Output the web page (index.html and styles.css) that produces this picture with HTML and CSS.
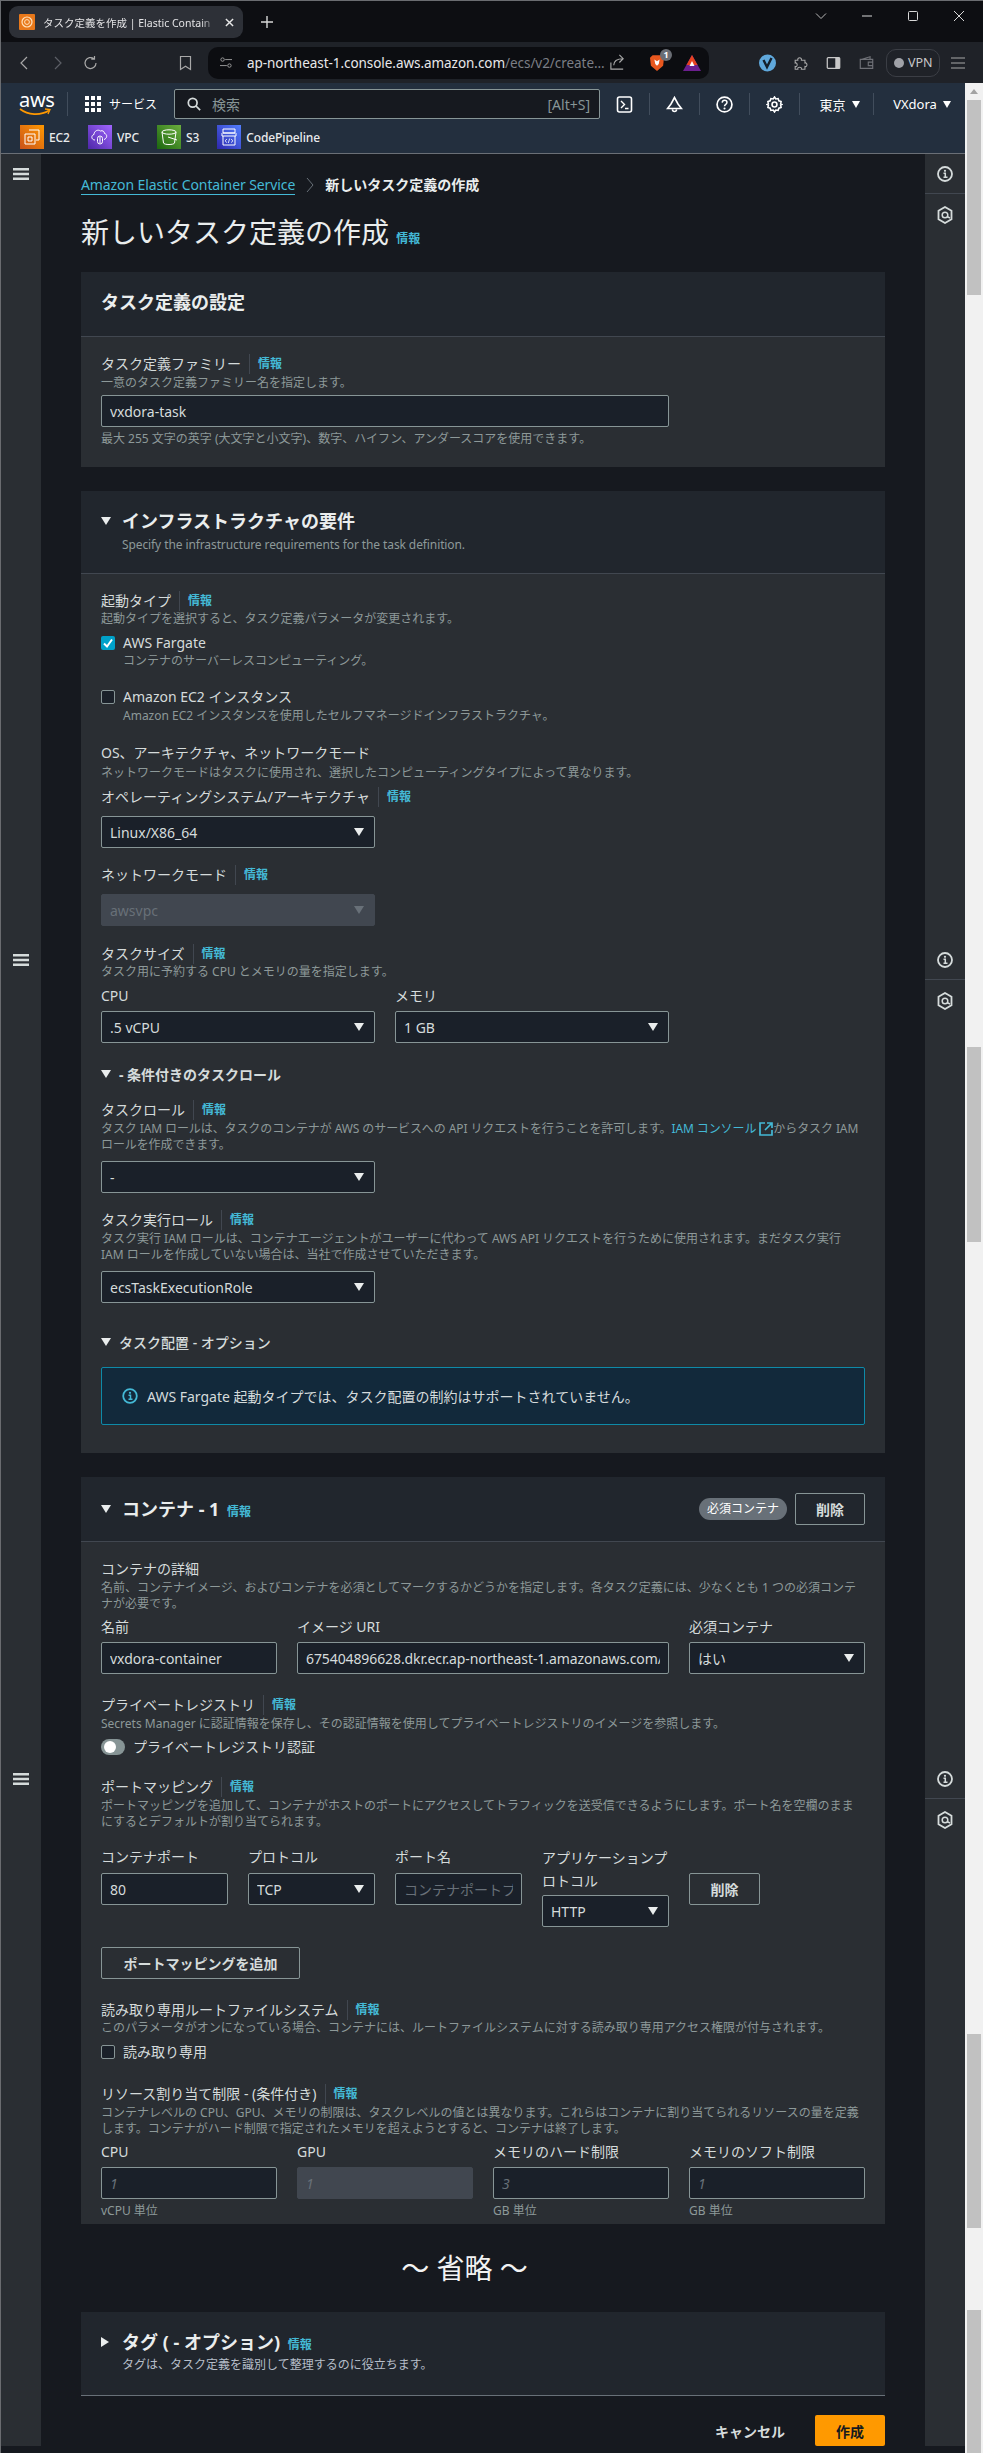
FILE: index.html
```html
<!DOCTYPE html>
<html lang="ja">
  <head>
    <meta charset="UTF-8" />
    <meta name="viewport" content="width=device-width, initial-scale=1.0" />
    <title>新しいタスク定義の作成</title>
    <link rel="stylesheet" href="styles.css">
  </head>
  <body>
    <div class="page">
      <!-- Browser chrome -->
      <div class="tabbar">
        <div class="tab">
          <svg class="favicon" viewBox="0 0 16 16"><rect width="16" height="16" rx="1" fill="#e8781a"/><circle cx="8" cy="8" r="5" fill="none" stroke="#ffe2bd" stroke-width="1.2"/><circle cx="8" cy="8" r="2.4" fill="none" stroke="#ffe2bd" stroke-width="1"/></svg>
          <span class="tab-title">タスク定義を作成 | Elastic Contain</span>
          <svg class="tab-close" viewBox="0 0 10 10"><path d="M1 1l8 8M9 1l-8 8" stroke="#e8e8e8" stroke-width="1.6"/></svg>
        </div>
        <svg class="tab-new" viewBox="0 0 12 12"><path d="M6 0v12M0 6h12" stroke="#d8d8d8" stroke-width="1.4"/></svg>
        <div class="win-controls">
          <svg viewBox="0 0 12 12"><path d="M1 3.5l5 5 5-5" fill="none" stroke="#b8b8b8"/></svg>
          <svg viewBox="0 0 12 12"><path d="M1 6h10" stroke="#d8d8d8"/></svg>
          <svg viewBox="0 0 12 12"><rect x="1.5" y="1.5" width="9" height="9" rx="1" fill="none" stroke="#d8d8d8"/></svg>
          <svg viewBox="0 0 12 12"><path d="M1 1l10 10M11 1L1 11" stroke="#d8d8d8"/></svg>
        </div>
      </div>

      <div class="toolbar">
        <svg class="tool" viewBox="0 0 16 16"><path d="M10.5 2L4.5 8l6 6" fill="none" stroke="#a8a8a8" stroke-width="1.2"/></svg>
        <svg class="tool" viewBox="0 0 16 16"><path d="M5.5 2l6 6-6 6" fill="none" stroke="#5c5f66" stroke-width="1.2"/></svg>
        <svg class="tool" viewBox="0 0 16 16"><path d="M13.5 8A5.5 5.5 0 1 1 11.5 3.8M12 1v3.2H8.8" fill="none" stroke="#a8a8a8" stroke-width="1.2"/></svg>
        <svg class="tool tool-mark" viewBox="0 0 16 16"><path d="M3 1.5h10v13l-5-3.2-5 3.2z" fill="none" stroke="#a8a8a8" stroke-width="1.2"/></svg>
        <div class="addressbar">
          <svg class="site-icon" viewBox="0 0 14 14"><circle cx="3" cy="3" r="2" fill="none" stroke="#a8a8a8"/><path d="M6 3h8M0 10h8" stroke="#a8a8a8"/><circle cx="11" cy="10" r="2" fill="none" stroke="#a8a8a8"/></svg>
          <span class="url">ap-northeast-1.console.aws.amazon.com<span class="url-path">/ecs/v2/create...</span></span>
          <svg class="share" viewBox="0 0 18 18"><path d="M2 9v7h13M5 12c0-5 4-7 10-7M11 1l4 4-4 4" fill="none" stroke="#a8a8a8" stroke-width="1.2"/></svg>
          <span class="url-sep"></span>
          <span class="brave">
            <svg viewBox="0 0 16 20"><path d="M3 1h10l3 3-1 9-7 6-7-6-1-9z" fill="#e8571e"/><path d="M5 6l3 2 3-2-1 5-2 2-2-2z" fill="#fff"/></svg>
            <span class="brave-count">1</span>
          </span>
          <svg class="rewards" viewBox="0 0 18 16"><path d="M9 0l9 16H0z" fill="#6b1f8f"/><path d="M9 0l5.5 10h-11z" fill="#e8431f"/><path d="M9 6l2.5 5h-5z" fill="#fff"/></svg>
        </div>
        <svg class="tool-ext vivaldi" viewBox="0 0 18 18"><circle cx="9" cy="9" r="8.5" fill="#5fa8dc"/><path d="M5 6l3.5 7L13 4" fill="none" stroke="#14202c" stroke-width="2.4"/></svg>
        <svg class="tool-ext" viewBox="0 0 18 18"><path d="M3 6h3c-1-4 5-4 4 0h4v3c3-1 3 5 0 4v3h-4c1-3-5-3-4 0H3v-3c3 1 3-5 0-4z" fill="none" stroke="#a8a8a8" stroke-width="1.2"/></svg>
        <svg class="tool-ext" viewBox="0 0 18 18"><rect x="2" y="3" width="14" height="12" rx="1" fill="none" stroke="#c8c8c8" stroke-width="1.4"/><rect x="11" y="3" width="5" height="12" fill="#c8c8c8"/></svg>
        <svg class="tool-ext" viewBox="0 0 18 18"><path d="M3 5l10-3v3M2 5h14v10H2zM11 8h5v4h-5z" fill="none" stroke="#6e7076" stroke-width="1.3"/></svg>
        <div class="vpn"><span class="vpn-dot"></span>VPN</div>
        <svg class="tool-menu" viewBox="0 0 14 12"><path d="M0 1h14M0 6h14M0 11h14" stroke="#a8a8a8" stroke-width="1.2"/></svg>
      </div>

      <div class="app-row">
        <div class="app">
          <!-- AWS console header -->
          <header class="nav">
            <div class="nav-main">
              <div class="aws-logo">
                <span class="aws-word">aws</span>
                <svg viewBox="0 0 32 8"><path d="M1 1c8 6 20 7 29 1.500" fill="none" stroke="#f90" stroke-width="1.800"/><path d="M26 1l5 .5-2 4.500" fill="none" stroke="#f90" stroke-width="1.300"/></svg>
              </div>
              <span class="nav-divider"></span>
              <div class="services">
                <span class="dots"><i></i><i></i><i></i><i></i><i></i><i></i><i></i><i></i><i></i></span>
                <span>サービス</span>
              </div>
              <div class="nav-search">
                <svg viewBox="0 0 16 16"><circle cx="6.500" cy="6.500" r="5" fill="none" stroke="#d5dbdb" stroke-width="2"/><path d="M10 10l5 5" stroke="#d5dbdb" stroke-width="2"/></svg>
                <span class="nav-search-text">検索</span>
                <span class="nav-search-key">[Alt+S]</span>
              </div>
              <div class="nav-cell">
                <svg viewBox="0 0 16 17"><rect x="1" y="1" width="14" height="15" rx="2" fill="none" stroke="#fff" stroke-width="1.600"/><path d="M4.500 5l3.500 3.500L4.500 12M8.500 12.500H12" fill="none" stroke="#fff" stroke-width="1.400"/></svg>
              </div>
              <div class="nav-cell">
                <svg viewBox="0 0 16 17"><path d="M8 1.500L4.500 8 1 12.500h14L11.500 8zM6 13.500a2 2 0 0 0 4 0" fill="none" stroke="#fff" stroke-width="1.600"/></svg>
              </div>
              <div class="nav-cell">
                <svg viewBox="0 0 16 16"><circle cx="8" cy="8" r="7" fill="none" stroke="#fff" stroke-width="1.600"/><path d="M5.800 6.200C6 4.600 7 4 8 4c1.400 0 2.300.9 2.300 2 0 1.800-2.300 1.900-2.300 3.600" fill="none" stroke="#fff" stroke-width="1.400"/><circle cx="8" cy="11.800" r="1" fill="#fff"/></svg>
              </div>
              <div class="nav-cell">
                <svg viewBox="0 0 16 16"><path d="M8 1l1.200 1.800 2.200-.4.700 2.100 2.100.7-.4 2.200L15 8l-1.200.6.400 2.200-2.100.7-.7 2.100-2.200-.4L8 15l-1.200-1.800-2.200.4-.7-2.100-2.100-.7.4-2.200L1 8l1.200-.6-.4-2.200 2.100-.7.7-2.100 2.200.4z" fill="none" stroke="#fff" stroke-width="1.500"/><circle cx="8" cy="8" r="2.300" fill="none" stroke="#fff" stroke-width="1.500"/></svg>
              </div>
              <div class="nav-cell nav-region">東京 <span class="caret-sm"></span></div>
              <div class="nav-cell nav-user">VXdora <span class="caret-sm"></span></div>
            </div>
            <div class="nav-favs">
              <div class="fav">
                <svg viewBox="0 0 24 24"><defs><linearGradient id="g-ec2" x1="0" y1="1" x2="1" y2="0"><stop offset="0" stop-color="#c8511b"/><stop offset="1" stop-color="#f90"/></linearGradient></defs><rect width="24" height="24" fill="url(#g-ec2)"/><path d="M9 5h10v10h-3M5 9h10v10H5zM8 12h4v4H8z" fill="none" stroke="#fff" stroke-width="1"/></svg>
                <span>EC2</span>
              </div>
              <div class="fav">
                <svg viewBox="0 0 24 24"><defs><linearGradient id="g-vpc" x1="0" y1="1" x2="1" y2="0"><stop offset="0" stop-color="#4d27a8"/><stop offset="1" stop-color="#a166ff"/></linearGradient></defs><rect width="24" height="24" fill="url(#g-vpc)"/><path d="M7 15c-4 0-4-5-1-5.500C6 6 10 4 12.500 6c2-1 4 .5 4 2.500 3 .5 3 5-.5 6" fill="none" stroke="#fff" stroke-width="1"/><rect x="9.500" y="11" width="5" height="8" rx="2.500" fill="none" stroke="#fff" stroke-width="1"/><path d="M12 12v6" stroke="#fff"/></svg>
                <span>VPC</span>
              </div>
              <div class="fav">
                <svg viewBox="0 0 24 24"><defs><linearGradient id="g-s3" x1="0" y1="1" x2="1" y2="0"><stop offset="0" stop-color="#1b660f"/><stop offset="1" stop-color="#6cae3e"/></linearGradient></defs><rect width="24" height="24" fill="url(#g-s3)"/><ellipse cx="12" cy="7" rx="7" ry="2.200" fill="none" stroke="#fff"/><path d="M5 7l1.500 11c.5 2 10.500 2 11 0L19 7M11 12l9 3" fill="none" stroke="#fff"/></svg>
                <span>S3</span>
              </div>
              <div class="fav">
                <svg viewBox="0 0 24 24"><defs><linearGradient id="g-cp" x1="0" y1="1" x2="1" y2="0"><stop offset="0" stop-color="#2e27ad"/><stop offset="1" stop-color="#527fff"/></linearGradient></defs><rect width="24" height="24" fill="url(#g-cp)"/><path d="M6 4h12v4H6zM6 8h12M5 8v3h14V8M6 11v9h12v-9" fill="none" stroke="#fff"/><path d="M10 14l-2 1.800 2 1.800M14 14l2 1.800-2 1.800M12.700 13.500l-1.400 4.500" fill="none" stroke="#fff" stroke-width=".8"/></svg>
                <span>CodePipeline</span>
              </div>
            </div>
          </header>

          <div class="shell">
            <aside class="rail rail-left">
              <div class="rail-group rail-first"><svg class="menu-icon" viewBox="0 0 16 12"><path d="M0 1.200h16M0 6h16M0 10.800h16" stroke="#d5dbdb" stroke-width="2.400"/></svg></div>
              <div class="rail-group rail-second"><svg class="menu-icon" viewBox="0 0 16 12"><path d="M0 1.200h16M0 6h16M0 10.800h16" stroke="#d5dbdb" stroke-width="2.400"/></svg></div>
              <div class="rail-group"><svg class="menu-icon" viewBox="0 0 16 12"><path d="M0 1.200h16M0 6h16M0 10.800h16" stroke="#d5dbdb" stroke-width="2.400"/></svg></div>
            </aside>

            <main class="main">
              <nav class="crumbs">
                <a class="crumb-link tight">Amazon Elastic Container Service</a>
                <svg class="crumb-sep" viewBox="0 0 8 16"><path d="M1 1l6 7-6 7" fill="none" stroke="#687078"/></svg>
                <span class="crumb-here">新しいタスク定義の作成</span>
              </nav>
              <h1 class="page-title">新しいタスク定義の作成 <a class="info">情報</a></h1>

              <section class="card">
                <div class="card-head head-plain"><h2>タスク定義の設定</h2></div>
                <div class="card-body">
                  <div class="label"><span>タスク定義ファミリー</span><i class="label-sep"></i><a class="info">情報</a></div>
                  <p class="desc mt1">一意のタスク定義ファミリー名を指定します。</p>
                  <input class="input w-wide mt4" type="text" value="vxdora-task">
                  <p class="desc mt4">最大 255 文字の英字 (大文字と小文字)、数字、ハイフン、アンダースコアを使用できます。</p>
                </div>
              </section>

              <section class="card">
                <div class="card-head head-sub">
                  <h2 class="caret-title"><span class="caret-lg"></span>インフラストラクチャの要件</h2>
                  <p class="desc sub tight">Specify the infrastructure requirements for the task definition.</p>
                </div>
                <div class="card-body">
                  <div class="label"><span>起動タイプ</span><i class="label-sep"></i><a class="info">情報</a></div>
                  <p class="desc">起動タイプを選択すると、タスク定義パラメータが変更されます。</p>
                  <div class="check mt6">
                    <span class="box box-on"><svg viewBox="0 0 14 14"><path d="M3 7.500l3 3 5-7" fill="none" stroke="#fff" stroke-width="2"/></svg></span>
                    <span>AWS Fargate</span>
                  </div>
                  <p class="desc check-desc">コンテナのサーバーレスコンピューティング。</p>
                  <div class="check mt18">
                    <span class="box"></span>
                    <span>Amazon EC2 インスタンス</span>
                  </div>
                  <p class="desc check-desc mt1">Amazon EC2 インスタンスを使用したセルフマネージドインフラストラクチャ。</p>

                  <div class="label mt19">OS、アーキテクチャ、ネットワークモード</div>
                  <p class="desc mt2">ネットワークモードはタスクに使用され、選択したコンピューティングタイプによって異なります。</p>
                  <div class="label mt6"><span>オペレーティングシステム/アーキテクチャ</span><i class="label-sep"></i><a class="info">情報</a></div>
                  <div class="select w-narrow mt9"><select><option>Linux/X86_64</option></select></div>

                  <div class="label mt17"><span>ネットワークモード</span><i class="label-sep"></i><a class="info">情報</a></div>
                  <div class="select select-off w-narrow mt9"><select disabled><option>awsvpc</option></select></div>

                  <div class="label mt18"><span>タスクサイズ</span><i class="label-sep"></i><a class="info">情報</a></div>
                  <p class="desc">タスク用に予約する CPU とメモリの量を指定します。</p>
                  <div class="size-row mt6">
                    <div>
                      <div class="label">CPU</div>
                      <div class="select mt5"><select><option>.5 vCPU</option></select></div>
                    </div>
                    <div>
                      <div class="label">メモリ</div>
                      <div class="select mt5"><select><option>1 GB</option></select></div>
                    </div>
                  </div>

                  <h3 class="fold mt22"><span class="caret-lg"></span>- 条件付きのタスクロール</h3>
                  <div class="label mt15"><span>タスクロール</span><i class="label-sep"></i><a class="info">情報</a></div>
                  <p class="desc tight mt1">タスク IAM ロールは、タスクのコンテナが AWS のサービスへの API リクエストを行うことを許可します。<a class="desc-link">IAM コンソール <svg class="ext" viewBox="0 0 14 14"><path d="M6 1H1v12h12V8M8 1h5v5M13 1L6 8" fill="none" stroke="#44b9d6" stroke-width="1.700"/></svg></a>からタスク IAM ロールを作成できます。</p>
                  <div class="select w-narrow mt8"><select><option>-</option></select></div>

                  <div class="label mt17"><span>タスク実行ロール</span><i class="label-sep"></i><a class="info">情報</a></div>
                  <p class="desc mt1">タスク実行 IAM ロールは、コンテナエージェントがユーザーに代わって AWS API リクエストを行うために使用されます。まだタスク実行 IAM ロールを作成していない場合は、当社で作成させていただきます。</p>
                  <div class="select w-narrow mt8"><select><option>ecsTaskExecutionRole</option></select></div>

                  <h3 class="fold fold-light mt30"><span class="caret-lg"></span>タスク配置 - オプション</h3>
                  <div class="alert">
                    <svg viewBox="0 0 16 16"><circle cx="8" cy="8" r="6.800" fill="none" stroke="#44b9d6" stroke-width="1.800"/><circle cx="8" cy="4.800" r="1.100" fill="#44b9d6"/><path d="M6.500 7.300H8.500V11M6.500 11.300h4" fill="none" stroke="#44b9d6" stroke-width="1.500"/></svg>
                    <span>AWS Fargate 起動タイプでは、タスク配置の制約はサポートされていません。</span>
                  </div>
                </div>
              </section>

              <section class="card card-container">
                <div class="card-head head-actions">
                  <h2 class="caret-title"><span class="caret-lg"></span>コンテナ - 1 <a class="info">情報</a></h2>
                  <span class="badge">必須コンテナ</span>
                  <button class="btn btn-small">削除</button>
                </div>
                <div class="card-body">
                  <div class="label">コンテナの詳細</div>
                  <p class="desc mt1">名前、コンテナイメージ、およびコンテナを必須としてマークするかどうかを指定します。各タスク定義には、少なくとも 1 つの必須コンテナが必要です。</p>
                  <div class="detail-row mt5">
                    <div>
                      <div class="label">名前</div>
                      <input class="input mt5" type="text" value="vxdora-container">
                    </div>
                    <div>
                      <div class="label">イメージ URI</div>
                      <input class="input tight mt5" type="text" value="675404896628.dkr.ecr.ap-northeast-1.amazonaws.com/vxdora-repo:latest">
                    </div>
                    <div>
                      <div class="label">必須コンテナ</div>
                      <div class="select mt5"><select><option>はい</option></select></div>
                    </div>
                  </div>

                  <div class="label mt21"><span>プライベートレジストリ</span><i class="label-sep"></i><a class="info">情報</a></div>
                  <p class="desc mt1">Secrets Manager に認証情報を保存し、その認証情報を使用してプライベートレジストリのイメージを参照します。</p>
                  <div class="check mt5"><span class="toggle"></span><span>プライベートレジストリ認証</span></div>

                  <div class="label mt20"><span>ポートマッピング</span><i class="label-sep"></i><a class="info">情報</a></div>
                  <p class="desc mt1">ポートマッピングを追加して、コンテナがホストのポートにアクセスしてトラフィックを送受信できるようにします。ポート名を空欄のままにするとデフォルトが割り当てられます。</p>
                  <div class="port-row mt17">
                    <div>
                      <div class="label">コンテナポート</div>
                      <input class="input mt6" type="text" value="80">
                    </div>
                    <div>
                      <div class="label">プロトコル</div>
                      <div class="select mt6"><select><option>TCP</option></select></div>
                    </div>
                    <div>
                      <div class="label">ポート名</div>
                      <input class="input mt6" type="text" placeholder="コンテナポートプロトコル">
                    </div>
                    <div>
                      <div class="label label-wrap">アプリケーションプロトコル</div>
                      <div class="select mt3"><select><option>HTTP</option></select></div>
                    </div>
                    <button class="btn port-delete">削除</button>
                  </div>
                  <button class="btn port-add">ポートマッピングを追加</button>

                  <div class="label mt21"><span>読み取り専用ルートファイルシステム</span><i class="label-sep"></i><a class="info">情報</a></div>
                  <p class="desc">このパラメータがオンになっている場合、コンテナには、ルートファイルシステムに対する読み取り専用アクセス権限が付与されます。</p>
                  <div class="check mt6"><span class="box"></span><span>読み取り専用</span></div>

                  <div class="label mt22"><span>リソース割り当て制限 - (条件付き)</span><i class="label-sep"></i><a class="info">情報</a></div>
                  <p class="desc mt1">コンテナレベルの CPU、GPU、メモリの制限は、タスクレベルの値とは異なります。これらはコンテナに割り当てられるリソースの量を定義します。コンテナがハード制限で指定されたメモリを超えようとすると、コンテナは終了します。</p>
                  <div class="limit-row mt5">
                    <div>
                      <div class="label">CPU</div>
                      <input class="input input-hint mt5" type="text" placeholder="1">
                      <p class="desc mt4">vCPU 単位</p>
                    </div>
                    <div>
                      <div class="label">GPU</div>
                      <input class="input input-hint mt5" type="text" placeholder="1" disabled>
                    </div>
                    <div>
                      <div class="label">メモリのハード制限</div>
                      <input class="input input-hint mt5" type="text" placeholder="3">
                      <p class="desc mt4">GB 単位</p>
                    </div>
                    <div>
                      <div class="label">メモリのソフト制限</div>
                      <input class="input input-hint mt5" type="text" placeholder="1">
                      <p class="desc mt4">GB 単位</p>
                    </div>
                  </div>
                </div>
              </section>

              <div class="omitted">〜 省略 〜</div>

              <section class="card card-tags">
                <div class="card-head head-sub">
                  <h2 class="caret-title"><span class="caret-right"></span>タグ ( - オプション) <a class="info">情報</a></h2>
                  <p class="desc sub sub-light">タグは、タスク定義を識別して整理するのに役立ちます。</p>
                </div>
              </section>

              <div class="actions">
                <span class="cancel">キャンセル</span>
                <button class="create">作成</button>
              </div>
            </main>

            <aside class="rail rail-right">
              <div class="rail-group rail-first">
                <div class="rail-cell"><svg viewBox="0 0 16 18"><circle cx="8" cy="9" r="7" fill="none" stroke="#d5dbdb" stroke-width="1.800"/><circle cx="8" cy="5.800" r="1.100" fill="#d5dbdb"/><path d="M6.500 8.300h1.800V12M6.500 12.300h4" fill="none" stroke="#d5dbdb" stroke-width="1.500"/></svg></div>
                <div class="rail-cell"><svg viewBox="0 0 16 18"><path d="M8 1l6.500 3.800v8.400L8 17l-6.500-3.800V4.800z" fill="none" stroke="#d5dbdb" stroke-width="1.800"/><circle cx="8" cy="9" r="2.800" fill="none" stroke="#d5dbdb" stroke-width="1.500"/><path d="M10 10.500l3 1.500" stroke="#d5dbdb" stroke-width="1.500"/></svg></div>
              </div>
              <div class="rail-group rail-second">
                <div class="rail-cell"><svg viewBox="0 0 16 18"><circle cx="8" cy="9" r="7" fill="none" stroke="#d5dbdb" stroke-width="1.800"/><circle cx="8" cy="5.800" r="1.100" fill="#d5dbdb"/><path d="M6.500 8.300h1.800V12M6.500 12.300h4" fill="none" stroke="#d5dbdb" stroke-width="1.500"/></svg></div>
                <div class="rail-cell"><svg viewBox="0 0 16 18"><path d="M8 1l6.500 3.800v8.400L8 17l-6.500-3.800V4.800z" fill="none" stroke="#d5dbdb" stroke-width="1.800"/><circle cx="8" cy="9" r="2.800" fill="none" stroke="#d5dbdb" stroke-width="1.500"/><path d="M10 10.500l3 1.500" stroke="#d5dbdb" stroke-width="1.500"/></svg></div>
              </div>
              <div class="rail-group">
                <div class="rail-cell"><svg viewBox="0 0 16 18"><circle cx="8" cy="9" r="7" fill="none" stroke="#d5dbdb" stroke-width="1.800"/><circle cx="8" cy="5.800" r="1.100" fill="#d5dbdb"/><path d="M6.500 8.300h1.800V12M6.500 12.300h4" fill="none" stroke="#d5dbdb" stroke-width="1.500"/></svg></div>
                <div class="rail-cell"><svg viewBox="0 0 16 18"><path d="M8 1l6.500 3.800v8.400L8 17l-6.500-3.800V4.800z" fill="none" stroke="#d5dbdb" stroke-width="1.800"/><circle cx="8" cy="9" r="2.800" fill="none" stroke="#d5dbdb" stroke-width="1.500"/><path d="M10 10.500l3 1.500" stroke="#d5dbdb" stroke-width="1.500"/></svg></div>
              </div>
            </aside>
          </div>
        </div>

        <div class="scrollbar">
          <span class="scroll-up"></span>
          <span class="thumb thumb-a"></span>
          <span class="thumb thumb-b"></span>
          <span class="thumb thumb-c"></span>
          <span class="thumb thumb-d"></span>
        </div>
      </div>
    </div>
  </body>
</html>
```

FILE: styles.css
```css
/* General Styles */
* {
  box-sizing: border-box;
}

body {
  margin: 0;
  background-color: #16191f;
  font-family: "Noto Sans", "Noto Sans CJK JP", sans-serif;
  font-size: 14px;
  color: #d5dbdb;
}

h1,
h2,
h3,
p {
  margin: 0;
}

.page {
  width: 983px;
  height: 2453px;
  overflow: hidden;
  border-top: 1px solid #6a6c70;
  border-left: 1px solid #6a6c70;
}

.tight {
  letter-spacing: -0.1px;
}

/* Browser chrome */
.tabbar {
  display: flex;
  height: 41px;
  padding: 5px 0 0 8px;
  background-color: #0d0e12;
}

.tab {
  display: flex;
  align-items: center;
  width: 234px;
  height: 32px;
  padding: 0 9px 0 10px;
  border-radius: 9px;
  background-color: #2d3037;
}

.favicon {
  width: 16px;
  height: 16px;
  flex: none;
}

.tab-title {
  flex: 1;
  margin-left: 8px;
  overflow: hidden;
  white-space: nowrap;
  font-size: 10.500px;
  color: #e4e4e6;
  -webkit-mask-image: linear-gradient(to right, #000 92%, transparent);
  mask-image: linear-gradient(to right, #000 92%, transparent);
}

.tab-close {
  width: 9px;
  height: 9px;
  margin-left: 10px;
  flex: none;
}

.tab-new {
  width: 12px;
  height: 12px;
  margin: 10px 0 0 18px;
}

.win-controls {
  display: flex;
  margin-left: auto;
  margin-right: 1px;
  margin-top: -5px;
  height: 30px;
}

.win-controls svg {
  width: 46px;
  height: 12px;
  margin-top: 9px;
}

.toolbar {
  display: flex;
  align-items: center;
  height: 41px;
  background-color: #1f2228;
}

.tool {
  width: 33px;
  height: 16px;
  flex: none;
}

.tool:first-child {
  margin-left: 7px;
}

.tool-mark {
  margin-left: 62px;
}

.addressbar {
  display: flex;
  align-items: center;
  width: 501px;
  height: 32px;
  margin-left: 6px;
  margin-right: 42px;
  padding: 0 16px 0 12px;
  border-radius: 10px;
  background-color: #0c0d11;
}

.site-icon {
  width: 12px;
  height: 12px;
  flex: none;
}

.url {
  width: 362px;
  flex: none;
  margin-left: 15px;
  white-space: nowrap;
  overflow: hidden;
  font-size: 13.500px;
  letter-spacing: -0.050px;
  color: #e8e8ea;
}

.url-path {
  color: #7b7e85;
}

.share {
  width: 17px;
  height: 17px;
  margin-left: 0;
  flex: none;
}

.url-sep {
  width: 1px;
  height: 16px;
  margin-left: 12px;
  background-color: #a8a8a8;
}

.brave {
  position: relative;
  width: 14px;
  height: 18px;
  margin-left: 12px;
  flex: none;
}

.brave svg {
  display: block;
  width: 14px;
  height: 18px;
}

.brave-count {
  position: absolute;
  top: -5px;
  right: -8px;
  width: 12px;
  height: 12px;
  border-radius: 50%;
  background-color: #6a6d75;
  font-size: 9px;
  font-weight: 700;
  line-height: 12px;
  text-align: center;
  color: #fff;
}

.rewards {
  width: 18px;
  height: 16px;
  margin-left: 19px;
  flex: none;
}

.tool-ext {
  width: 33px;
  height: 16px;
  flex: none;
}

.vivaldi {
  height: 18px;
}

.vpn {
  display: flex;
  align-items: center;
  gap: 4px;
  width: 54px;
  height: 28px;
  margin-left: 3px;
  padding-left: 7px;
  border: 1px solid #3b3e45;
  border-radius: 10px;
  font-size: 12.500px;
  color: #c8c8c8;
}

.vpn-dot {
  display: block;
  width: 10px;
  height: 10px;
  border-radius: 50%;
  background-color: #a0a2a8;
}

.tool-menu {
  width: 14px;
  height: 12px;
  margin-left: 11px;
}

/* Everything under the browser toolbar */
.app-row {
  display: flex;
}

.app {
  width: 964px;
  flex: none;
}

/* AWS console header */
.nav {
  height: 71px;
  border-bottom: 1px solid #6a6f76;
  background-color: #232f3e;
}

.nav-main {
  display: flex;
  align-items: center;
  height: 40px;
  padding: 5px 0 3px 18px;
}

.aws-logo {
  display: flex;
  flex-direction: column;
  width: 32px;
  color: #fff;
}

.aws-word {
  height: 15px;
  font-size: 20px;
  line-height: 13px;
  letter-spacing: -0.300px;
}

.aws-logo svg {
  width: 32px;
  height: 8px;
}

.nav-divider {
  width: 1px;
  height: 24px;
  margin-left: 16px;
  background-color: #414d5c;
}

.services {
  display: flex;
  align-items: center;
  gap: 8px;
  margin-left: 17px;
  font-size: 12px;
  color: #fff;
}

.dots {
  display: grid;
  grid-template-columns: repeat(3, 4px);
  gap: 2px;
}

.dots i {
  width: 4px;
  height: 4px;
  background-color: #fff;
}

.nav-search {
  display: flex;
  align-items: center;
  width: 426px;
  height: 30px;
  margin-left: 17px;
  padding: 0 9px 0 12px;
  border: 1px solid #879596;
  border-radius: 2px;
  background-color: #16191f;
}

.nav-search svg {
  width: 14px;
  height: 14px;
}

.nav-search-text {
  margin-left: 11px;
  color: #879596;
}

.nav-search-key {
  margin-left: auto;
  color: #879596;
}

.nav-cell {
  display: flex;
  align-items: center;
  justify-content: center;
  width: 50px;
  height: 22px;
  border-right: 1px solid #414d5c;
  font-size: 13px;
  color: #fff;
}

.nav-cell svg {
  width: 17px;
  height: 17px;
}

.nav-region {
  gap: 6px;
  width: 74px;
  padding-left: 6px;
}

.nav-user {
  gap: 6px;
  width: 90px;
  padding-left: 6px;
  border-right: none;
}

.caret-sm {
  width: 0;
  height: 0;
  border-left: 4.500px solid transparent;
  border-right: 4.500px solid transparent;
  border-top: 7px solid #fff;
}

.nav-favs {
  display: flex;
  gap: 18px;
  padding-left: 19px;
  margin-top: 2px;
}

.fav {
  display: flex;
  align-items: center;
  gap: 5px;
  font-size: 12px;
  font-weight: 500;
  letter-spacing: -0.1px;
  color: #e9ebed;
}

.fav svg {
  width: 24px;
  height: 24px;
}

/* Rails */
.shell {
  display: flex;
}

.rail {
  flex: none;
  background-color: #2a2e33;
}

.rail-left {
  width: 40px;
}

.rail-right {
  width: 40px;
}

.rail-first {
  height: 786px;
}

.rail-second {
  height: 819px;
}

.rail-left .rail-group {
  padding: 14px 0 0 12px;
}

.menu-icon {
  display: block;
  width: 16px;
  height: 12px;
}

.rail-cell {
  display: flex;
  align-items: center;
  justify-content: center;
  height: 40px;
  border-bottom: 1px solid #414750;
}

.rail-cell + .rail-cell {
  border-bottom: none;
  height: 42px;
}

.rail-cell svg {
  width: 16px;
  height: 18px;
}

/* Main column */
.main {
  flex: 1;
  min-width: 0;
  padding: 21px 40px 0;
}

.crumbs {
  display: flex;
  align-items: center;
  height: 20px;
  line-height: 20px;
}

.crumb-link {
  height: 20px;
  border-bottom: 1px solid #44b9d6;
  color: #44b9d6;
}

.crumb-sep {
  width: 8px;
  height: 16px;
  margin: 0 11px 0 11px;
}

.crumb-here {
  font-weight: 700;
  color: #eaeded;
}

.page-title {
  margin-top: 19px;
  font-size: 28px;
  font-weight: 400;
  line-height: 36px;
  color: #eaeded;
}

.info {
  font-size: 12px;
  font-weight: 700;
  line-height: 1;
  color: #44b9d6;
}

/* Cards */
.card {
  margin-top: 24px;
  background-color: #2a2e33;
}

.page-title + .card {
  margin-top: 22px;
}

.card-head {
  border-bottom: 1px solid #414750;
  background-color: #21262d;
}

.head-plain {
  padding: 18px 20px 22px;
}

.head-sub {
  padding: 18px 20px 20px;
}

.head-actions {
  display: flex;
  align-items: center;
  height: 65px;
  padding: 0 20px;
}

.head-actions h2 {
  flex: 1;
}

.card-head h2 {
  position: relative;
  font-size: 18px;
  font-weight: 700;
  line-height: 24px;
  color: #eaeded;
}

.card-head .info {
  margin-left: 3px;
}

.caret-title {
  padding-left: 21px;
}

.caret-lg {
  display: inline-block;
  width: 0;
  height: 0;
  margin-right: 8px;
  vertical-align: 2px;
  border-left: 5px solid transparent;
  border-right: 5px solid transparent;
  border-top: 8px solid #eaeded;
}

.caret-title .caret-lg,
.caret-right {
  position: absolute;
  left: 0;
  top: 8px;
}

.caret-right {
  width: 0;
  height: 0;
  top: 7px;
  border-top: 5px solid transparent;
  border-bottom: 5px solid transparent;
  border-left: 8px solid #eaeded;
}

.card-body {
  padding: 17px 20px 20px;
}

.card-container .card-body {
  padding-bottom: 5px;
}

.card-tags {
  margin-top: 0;
  background-color: #21262d;
}

.card-tags .card-head {
  padding-bottom: 22px;
  border-bottom: 1px solid #687078;
}

.label {
  display: flex;
  align-items: center;
  line-height: 20px;
  color: #d5dbdb;
}

.label-sep {
  width: 1px;
  height: 20px;
  margin: 0 8px;
  background-color: #414750;
}

.label-wrap {
  display: block;
  line-height: 23px;
  margin-top: -1px;
}

.desc {
  font-size: 12px;
  line-height: 16px;
  color: #8d9999;
}

.desc-link {
  color: #44b9d6;
}

.ext {
  width: 14px;
  height: 14px;
  vertical-align: -3px;
}

.sub {
  margin-top: 4px;
  padding-left: 21px;
}

.sub-light {
  margin-top: 3px;
  color: #b6bec9;
}

.input {
  display: block;
  width: 100%;
  height: 32px;
  padding: 0 8px;
  border: 1px solid #879596;
  border-radius: 2px;
  background-color: #1a2029;
  font: inherit;
  color: #d5dbdb;
  outline: none;
}

.input::placeholder {
  color: #687078;
  opacity: 1;
}

.input-hint::placeholder {
  font-style: italic;
}

.input:disabled {
  border-color: #414750;
  background-color: #414750;
}

.w-wide {
  width: 568px;
}

.w-narrow {
  width: 274px;
}

.select {
  position: relative;
  height: 32px;
}

.select::after {
  content: "";
  position: absolute;
  top: 12px;
  right: 11px;
  border-left: 5.500px solid transparent;
  border-right: 5.500px solid transparent;
  border-top: 8px solid #eaeded;
}

.select select {
  display: block;
  width: 100%;
  height: 32px;
  padding: 0 8px;
  border: 1px solid #879596;
  border-radius: 2px;
  background-color: #1a2029;
  font: inherit;
  color: #d5dbdb;
  appearance: none;
}

.select-off::after {
  border-top-color: #687078;
}

.select-off select {
  border-color: #414750;
  background-color: #414750;
  color: #687078;
  opacity: 1;
}

.check {
  display: flex;
  align-items: center;
  line-height: 20px;
  color: #d5dbdb;
}

.check-desc {
  padding-left: 22px;
}

.box {
  display: block;
  width: 14px;
  height: 14px;
  margin-right: 8px;
  border: 1px solid #879596;
  border-radius: 2px;
  background-color: #1a2029;
}

.box-on {
  border: none;
  background-color: #00a1c9;
}

.box-on svg {
  display: block;
  width: 14px;
  height: 14px;
}

.toggle {
  position: relative;
  width: 24px;
  height: 16px;
  margin-right: 8px;
  border-radius: 8px;
  background-color: #879596;
}

.toggle::after {
  content: "";
  position: absolute;
  top: 2px;
  left: 3px;
  width: 12px;
  height: 12px;
  border-radius: 50%;
  background-color: #fff;
}

.size-row {
  display: grid;
  grid-template-columns: 274px 274px;
  gap: 20px;
}

.detail-row {
  display: grid;
  grid-template-columns: 176px 1fr 176px;
  gap: 20px;
}

.port-row {
  display: grid;
  grid-template-columns: repeat(4, 127px) 71px;
  gap: 20px;
  align-items: start;
}

.port-delete {
  margin-top: 26px;
}

.limit-row {
  display: grid;
  grid-template-columns: repeat(4, 176px);
  gap: 20px;
}

.fold {
  font-size: 14px;
  font-weight: 700;
  line-height: 20px;
  color: #d5dbdb;
}

.fold-light {
  font-weight: 500;
}

.alert {
  display: flex;
  align-items: center;
  gap: 9px;
  height: 58px;
  margin-top: 14px;
  margin-bottom: 8px;
  padding-left: 20px;
  border: 1px solid #0e8aa8;
  border-radius: 2px;
  background-color: #12293b;
  color: #d5dbdb;
}

.alert svg {
  width: 16px;
  height: 16px;
  flex: none;
}

.btn {
  height: 32px;
  padding: 0;
  border: 1px solid #879596;
  border-radius: 2px;
  background-color: transparent;
  font: inherit;
  font-weight: 700;
  color: #d5dbdb;
}

.btn-small {
  flex: none;
  width: 70px;
  margin-left: 8px;
}

.port-add {
  display: block;
  width: 199px;
  margin-top: 20px;
}

.badge {
  flex: none;
  width: 88px;
  height: 22px;
  border-radius: 11px;
  background-color: #687078;
  font-size: 12px;
  line-height: 22px;
  text-align: center;
  color: #fff;
}

.omitted {
  height: 88px;
  padding-right: 37px;
  font-size: 28px;
  line-height: 88px;
  text-align: center;
  color: #f2f3f3;
}

.actions {
  display: flex;
  align-items: center;
  justify-content: flex-end;
  gap: 30px;
  margin-top: 19px;
}

.cancel {
  font-weight: 700;
  color: #d5dbdb;
}

.create {
  width: 70px;
  height: 31px;
  padding: 0;
  border: none;
  border-radius: 2px;
  background-color: #ff9900;
  font: inherit;
  font-weight: 700;
  color: #16191f;
}

/* Fake browser scrollbar */
.scrollbar {
  display: flex;
  flex-direction: column;
  align-items: center;
  width: 18px;
  height: 2370px;
  background-color: #f1f1f1;
}

.scroll-up {
  width: 0;
  height: 0;
  margin-top: 6px;
  border-left: 4px solid transparent;
  border-right: 4px solid transparent;
  border-bottom: 5px solid #a3a3a3;
}

.thumb {
  display: block;
  width: 14px;
  background-color: #c1c1c1;
}

.thumb-a {
  height: 195px;
  margin-top: 6px;
}

.thumb-b {
  height: 195px;
  margin-top: 752px;
}

.thumb-c {
  height: 194px;
  margin-top: 792px;
}

.thumb-d {
  height: 143px;
  margin-top: 82px;
}

/* Spacing helpers */
.mt1 { margin-top: 1px; }
.mt2 { margin-top: 2px; }
.mt3 { margin-top: 3px; }
.mt4 { margin-top: 4px; }
.mt5 { margin-top: 5px; }
.mt6 { margin-top: 6px; }
.mt8 { margin-top: 8px; }
.mt9 { margin-top: 9px; }
.mt15 { margin-top: 15px; }
.mt17 { margin-top: 17px; }
.mt18 { margin-top: 18px; }
.mt19 { margin-top: 19px; }
.mt20 { margin-top: 20px; }
.mt21 { margin-top: 21px; }
.mt22 { margin-top: 22px; }
.mt30 { margin-top: 30px; }
```
